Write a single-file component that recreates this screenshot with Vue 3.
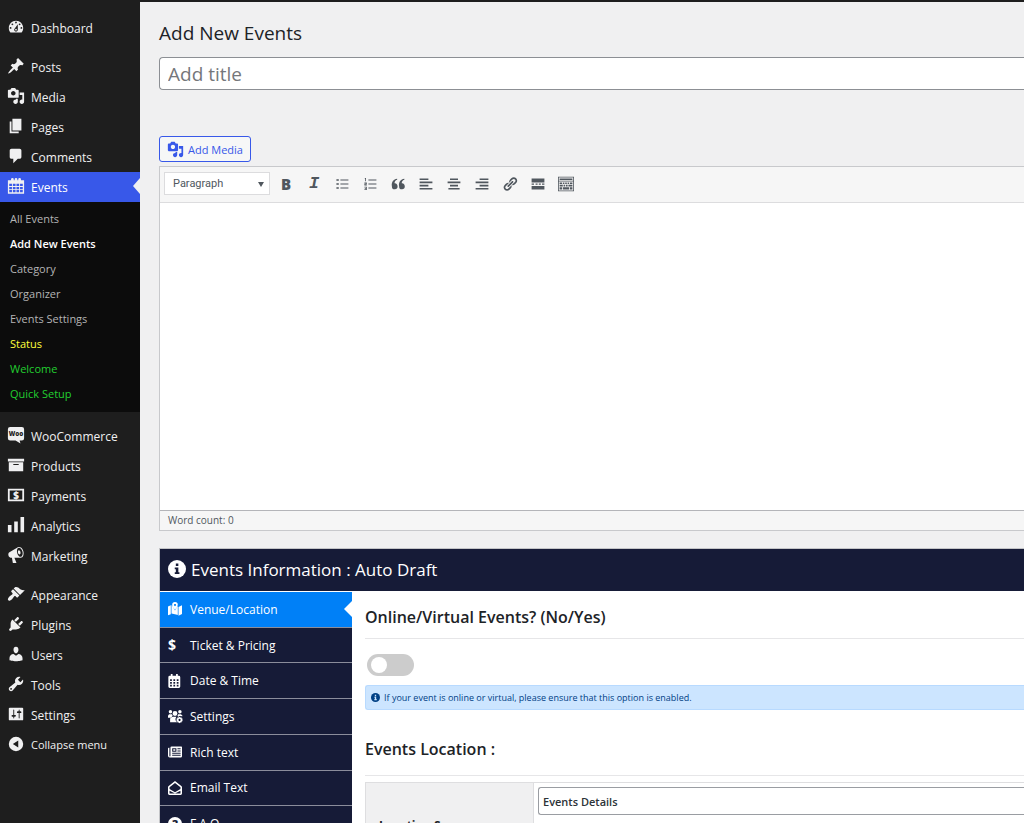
<script setup>
import { ref } from 'vue'

const icons = {
  dashboard: 'M3.76 16h12.48c1.1-1.37 1.76-3.11 1.76-5 0-4.42-3.58-8-8-8s-8 3.58-8 8c0 1.89.66 3.63 1.76 5zM10 4c.55 0 1 .45 1 1s-.45 1-1 1-1-.45-1-1 .45-1 1-1zM6 6c.55 0 1 .45 1 1s-.45 1-1 1-1-.45-1-1 .45-1 1-1zm8 0c.55 0 1 .45 1 1s-.45 1-1 1-1-.45-1-1 .45-1 1-1zm-5.37 5.55L12 7v6c0 1.1-.9 2-2 2s-2-.9-2-2c0-.57.24-1.08.63-1.45zM4 10c.55 0 1 .45 1 1s-.45 1-1 1-1-.45-1-1 .45-1 1-1zm12 0c.55 0 1 .45 1 1s-.45 1-1 1-1-.45-1-1 .45-1 1-1zm-5 3c0-.55-.45-1-1-1s-1 .45-1 1 .45 1 1 1 1-.45 1-1z',
  post: 'M10.44 3.02l1.82-1.82 6.36 6.35-1.83 1.82c-1.05-.68-2.48-.57-3.41.36l-.75.75c-.92.93-1.04 2.35-.35 3.41l-1.83 1.82-2.41-2.41-2.8 2.79c-.42.42-3.38 2.71-3.8 2.29s1.86-3.39 2.28-3.81l2.79-2.79L4.1 9.36l1.83-1.82c1.05.69 2.48.57 3.4-.36l.75-.75c.93-.92 1.05-2.35.36-3.41z',
  media: 'M13 11V4c0-.55-.45-1-1-1h-1.67L9 1H5L3.67 3H2c-.55 0-1 .45-1 1v7c0 .55.45 1 1 1h10c.55 0 1-.45 1-1zM7 4.5c1.38 0 2.5 1.12 2.5 2.5S8.38 9.5 7 9.5 4.5 8.38 4.5 7 5.62 4.5 7 4.5zM14 6h5v10.5c0 1.38-1.12 2.5-2.5 2.5S14 17.88 14 16.5s1.12-2.5 2.5-2.5c.17 0 .34.02.5.05V9h-3V6zm-4 8.05V13h2v3.5c0 1.38-1.12 2.5-2.5 2.5S7 17.88 7 16.5 8.12 14 9.5 14c.17 0 .34.02.5.05z',
  page: 'M6 15V2h10v13H6zm-1 1h8v2H3V5h2v11z',
  comments: 'M5 2h9c1.1 0 2 .9 2 2v7c0 1.1-.9 2-2 2h-2l-5 5v-5H5c-1.1 0-2-.9-2-2V4c0-1.1.9-2 2-2z',
  calendar: 'M15 3.500h4v15H1v-15h3.500V2.500a1.500 1.500 0 0 1 3 0v1H8.500V2.500a1.500 1.500 0 0 1 3 0v1h1V2.500a1.500 1.500 0 0 1 3 0v1zM2.500 7.500v2.500h3v-2.500zM6.500 7.500v2.500h3v-2.500zM10.500 7.500v2.500h3v-2.500zM14.500 7.500v2.500h3v-2.500zM2.500 11v2.500h3v-2.500zM6.500 11v2.500h3v-2.500zM10.500 11v2.500h3v-2.500zM14.500 11v2.500h3v-2.500zM2.500 14.500v2.500h3v-2.500zM6.500 14.500v2.500h3v-2.500zM10.500 14.500v2.500h3v-2.500zM14.500 14.500v2.500h3v-2.500z',
  archive: 'M19 3v3H1V3h18zM2 7h16v10H2V7zm11 3V9H7v1h6z',
  chart: 'M19 18V1h-4v17h4zm-7 0V6H8v12h4zm-7 0v-8H1v8h4z',
  megaphone: 'M18.150 5.940c.46 1.620.38 3.220-.02 4.480-.42 1.280-1.260 2.180-2.300 2.480-.16.06-.26.06-.4.06-.06.02-.12.02-.18.02-.06.02-.14.02-.22.02h-6.800l2.220 5.500c.02.14-.06.26-.14.34-.08.1-.24.16-.34.16H6.950c-.1 0-.26-.06-.34-.16-.08-.08-.16-.2-.14-.34l-1-5.500H4.250l-.02-.02c-.5.06-1.080-.18-1.540-.62s-.88-1.080-1.060-1.880c-.24-.8-.2-1.560-.02-2.200.18-.62.58-1.080 1.060-1.300l.02-.02 9-5.400c.1-.06.18-.1.24-.16.06-.04.14-.08.24-.12.16-.08.28-.12.5-.18 1.040-.3 2.240.1 3.220.98s1.840 2.240 2.260 3.860zm-2.580 5.980h-.02c.4-.1.74-.34 1.040-.7.58-.7.86-1.760.86-3.040 0-.64-.1-1.300-.28-1.980-.34-1.360-1.020-2.500-1.780-3.240s-1.680-1.100-2.460-.88c-.82.22-1.400.96-1.700 2-.32 1.040-.28 2.360.06 3.720.38 1.360 1 2.500 1.800 3.240.78.74 1.620 1.100 2.480.88zm-2.540-7.080c.22-.04.42-.02.62.04.38.16.76.48 1.020 1s.42 1.200.42 1.780c0 .3-.04.56-.12.8-.18.48-.44.84-.86.94-.34.1-.8-.06-1.140-.4s-.64-.86-.78-1.500c-.18-.62-.12-1.240.02-1.720s.48-.84.82-.94z',
  appearance: 'M14.48 11.06L7.41 3.99l1.5-1.5c.5-.56 2.3-.47 3.51.32 1.21.8 1.43 1.28 2.91 2.1 1.18.64 2.45 1.26 4.45.85zm-.71.71L6.7 4.7 4.93 6.47c-.39.39-.39 1.02 0 1.41l1.06 1.06c.39.39.39 1.03 0 1.42-.6.6-1.43 1.11-2.21 1.69-.35.26-.7.53-1.01.84C1.43 14.23.4 16.08 1.4 17.07c.99 1 2.84-.03 4.18-1.36.31-.31.58-.66.85-1.02.57-.78 1.08-1.61 1.69-2.21.39-.39 1.02-.39 1.41 0l1.06 1.06c.39.39 1.02.39 1.41 0z',
  plugins: 'M13.11 4.36L9.87 7.6 8 5.73l3.24-3.24c.35-.34 1.05-.2 1.56.32.52.51.66 1.21.31 1.55zm-8 1.77l.91-1.12 9.01 9.01-1.19.84c-.71.71-2.63 1.16-3.82 1.16H6.14L4.9 17.26c-.59.59-1.54.59-2.12 0-.59-.58-.59-1.53 0-2.12l1.24-1.24v-3.88c0-1.13.4-3.19 1.09-3.89zm7.26 3.97l3.24-3.24c.34-.35 1.04-.21 1.55.31.52.51.66 1.21.31 1.55l-3.24 3.25z',
  users: 'M10 9.25c-2.27 0-2.73-3.44-2.73-3.44C7 4.02 7.82 2 9.97 2c2.16 0 2.98 2.02 2.71 3.81 0 0-.41 3.44-2.68 3.44zm0 2.57L12.72 10c2.39 0 4.52 2.33 4.52 4.53v2.49s-3.65 1.13-7.24 1.13c-3.65 0-7.24-1.13-7.24-1.13v-2.49c0-2.25 1.94-4.48 4.47-4.48z',
  tools: 'M16.68 9.77c-1.34 1.34-3.3 1.67-4.95.99l-5.41 6.52c-.99.99-2.59.99-3.58 0s-.99-2.59 0-3.57l6.52-5.42c-.68-1.65-.35-3.61.99-4.95 1.28-1.28 3.12-1.62 4.72-1.06l-2.89 2.89 2.82 2.82 2.86-2.87c.53 1.58.18 3.39-1.08 4.65zM3.81 16.21c.4.39 1.04.39 1.43 0 .4-.4.4-1.04 0-1.43-.39-.4-1.03-.4-1.43 0-.39.39-.39 1.03 0 1.43z',
  settings: 'M18 16V4c0-.55-.45-1-1-1H3c-.55 0-1 .45-1 1v12c0 .55.45 1 1 1h14c.55 0 1-.45 1-1zM8 11h1c.55 0 1 .45 1 1s-.45 1-1 1H8v1.500c0 .28-.22.5-.5.5s-.5-.22-.5-.5V13H6c-.55 0-1-.45-1-1s.45-1 1-1h1V5.500c0-.28.22-.5.5-.5s.5.22.5.5V11zm5-2h-1c-.55 0-1-.45-1-1s.45-1 1-1h1V5.500c0-.28.22-.5.5-.5s.5.22.5.5V7h1c.55 0 1 .45 1 1s-.45 1-1 1h-1v5.500c0 .28-.22.5-.5.5s-.5-.22-.5-.5V9z',
  collapse: 'M10 2a8 8 0 1 1 0 16 8 8 0 0 1 0-16zM12.500 6L6.500 10l6 4z',
  woo: 'M3.500 1h13A2.500 2.500 0 0 1 19 3.500v10a2.500 2.500 0 0 1-2.500 2.500H14l1 3.500L9.500 16h-6A2.500 2.500 0 0 1 1 13.500v-10A2.500 2.500 0 0 1 3.500 1z',
  payments: 'M1 3h18v14H1zM3 5v10h14V5z'
}

const groups = [
  { id: 'home', items: [{ label: 'Dashboard', icon: 'dashboard' }] },
  {
    id: 'content',
    items: [
      { label: 'Posts', icon: 'post' },
      { label: 'Media', icon: 'media' },
      { label: 'Pages', icon: 'page' },
      { label: 'Comments', icon: 'comments' },
      {
        label: 'Events',
        icon: 'calendar',
        active: true,
        children: [
          { label: 'All Events' },
          { label: 'Add New Events', tone: 'current' },
          { label: 'Category' },
          { label: 'Organizer' },
          { label: 'Events Settings' },
          { label: 'Status', tone: 'yellow' },
          { label: 'Welcome', tone: 'green' },
          { label: 'Quick Setup', tone: 'green' }
        ]
      }
    ]
  },
  {
    id: 'shop',
    items: [
      { label: 'WooCommerce', icon: 'woo' },
      { label: 'Products', icon: 'archive' },
      { label: 'Payments', icon: 'payments' },
      { label: 'Analytics', icon: 'chart' },
      { label: 'Marketing', icon: 'megaphone' }
    ]
  },
  {
    id: 'admin',
    items: [
      { label: 'Appearance', icon: 'appearance' },
      { label: 'Plugins', icon: 'plugins' },
      { label: 'Users', icon: 'users' },
      { label: 'Tools', icon: 'tools' },
      { label: 'Settings', icon: 'settings' }
    ]
  }
]

const tools = [
  { name: 'Bulleted list', d: 'M3 4h3v2H3zM3 9h3v2H3zM3 14h3v2H3zM8 4.500h10v1H8zM8 9.500h10v1H8zM8 14.500h10v1H8z' },
  { name: 'Numbered list', d: 'M3.500 2.500h1.500v4H4V3.500h-.5zM3 8h3v2.500H4v.5h2v1H3V9.500h2V9H3zM3 13.500h3v4H3v-1h2v-.5H3.500v-1H5v-.5H3zM8 4.500h10v1H8zM8 9.500h10v1H8zM8 14.500h10v1H8z' },
  { name: 'Blockquote', d: 'M9.500 13.200A3.400 3.400 0 1 1 2.400 13C1.400 7.500 4.500 4.200 8.900 3.500L9 4.700C6.500 5.500 5.600 7 5.700 9.200c2.200-.3 3.800 1.600 3.800 4zM18.500 13.200a3.400 3.400 0 1 1-7.100-.2c-1-5.500 2.100-8.800 6.500-9.500l.1 1.200c-2.500.8-3.400 2.300-3.300 4.500 2.200-.3 3.800 1.600 3.800 4z' },
  { name: 'Align left', d: 'M2 3h11v2H2zM2 7h16v2H2zM2 11h11v2H2zM2 15h16v2H2z' },
  { name: 'Align center', d: 'M5 3h10v2H5zM2 7h16v2H2zM5 11h10v2H5zM3 15h14v2H3z' },
  { name: 'Align right', d: 'M7 3h11v2H7zM2 7h16v2H2zM7 11h11v2H7zM2 15h16v2H2z' },
  { name: 'Insert link', d: 'M17.740 2.760c1.680 1.690 1.680 4.410 0 6.100l-1.530 1.520c-1.120 1.120-2.700 1.470-4.140 1.090l2.620-2.610.76-.77.76-.76c.84-.84.84-2.200 0-3.040-.84-.85-2.200-.85-3.040 0l-.77.76-3.380 3.380c-.37-1.440-.02-3.020 1.100-4.140l1.520-1.530c1.690-1.680 4.420-1.680 6.100 0zM8.590 13.430l5.340-5.340c.42-.42.42-1.100 0-1.520-.44-.43-1.130-.39-1.530 0l-5.330 5.340c-.42.42-.42 1.100 0 1.520.44.43 1.130.39 1.520 0zm-.76 2.290l4.140-4.150c.38 1.440.03 3.020-1.090 4.140l-1.520 1.530c-1.690 1.680-4.410 1.680-6.100 0-1.680-1.680-1.680-4.420 0-6.100l1.530-1.520c1.120-1.120 2.700-1.470 4.140-1.100l-4.140 4.150c-.85.84-.85 2.200 0 3.050.84.84 2.200.84 3.040 0z' },
  { name: 'Read more', d: 'M2 3h16v5H2zM2 9.500h3v1.500H2zM7 9.500h2.500v1.500H7zM11 9.500h2.500v1.500H11zM15 9.500h3v1.500h-3zM2 12.500h16v4.500H2z' },
  { name: 'Toolbar toggle', d: 'M0 1h20v18H0zM1 2v4h18V2zM2 3h16v2H2zM1 7v11h18V7zM2 8h3v2H2zM6 8h2v2H6zM9 8h2v2H9zM12 8h2v2h-2zM15 8h3v2h-3zM2 11h4v2H2zM7 11h2v2H7zM10 11h2v2h-2zM13 11h5v2h-5zM2 14h3v3H2zM6 14h8v3H6zM15 14h3v3h-3z' }
]

const tabs = [
  { label: 'Venue/Location', icon: 'M0 6.500L4 4.500v13L0 19zM5 4.500l1.500.6c.5 2.700 2 4.800 3.500 6.900 1.500-2.100 3-4.200 3.500-6.900L14 7.500v11l-1-.2-8-1.800zM15 7l5-2.500V17l-5 2.500zM10 0a4 4 0 0 1 4 4c0 2-2 4.700-4 7-2-2.300-4-5-4-7a4 4 0 0 1 4-4zM10 2.800a1.400 1.400 0 1 0 .01 0z', active: true },
  { label: 'Ticket & Pricing', sign: '$' },
  { label: 'Date & Time', icon: 'M4 0h2.500v2.500h5V0H14v2.500h1.500A2 2 0 0 1 17.500 4.500V18a2 2 0 0 1-2 2h-13a2 2 0 0 1-2-2V4.500a2 2 0 0 1 2-2H4zM3 7.500V10h2.500V7.500zM7.700 7.500V10h2.500V7.500zM12.500 7.500V10H15V7.500zM3 11.500V14h2.500v-2.500zM7.700 11.500V14h2.500v-2.500zM12.500 11.500V14H15v-2.500zM3 15.500V18h2.500v-2.500zM7.700 15.500V18h2.500v-2.500zM12.500 15.500V18H15v-2.500z' },
  { label: 'Settings', wide: true, icon: 'M3.500 1.500a2.500 2.500 0 1 1 0 5 2.500 2.500 0 0 1 0-5zM10 3a3.500 3.500 0 1 1 0 7 3.500 3.500 0 0 1 0-7zM17 1.500a2.500 2.500 0 1 1 0 5 2.500 2.500 0 0 1 0-5zM1.500 7.500h4l1.200 1.600-2 3.400H0V9.500zM14.500 7.500h4l2 1.800v1.200l-4.500-.5-1.500 1.500-.9-2zM7 11h5a6 6 0 0 0 1 8H3v-4a4 4 0 0 1 4-4zM16.500 11l1 1 1.600-.3.4 1.600 1.500.8-.6 1.500.6 1.500-1.500.8-.4 1.500-1.600-.2-1 1-1.300-1-1.500.2-.3-1.500-1.500-.8.7-1.500-.7-1.500 1.500-.8.300-1.600 1.500.3zM16.500 14a1.500 1.500 0 1 0 .01 0z' },
  { label: 'Rich text', icon: 'M5 2h14a1 1 0 0 1 1 1v13a2 2 0 0 1-2 2H2.500A2.500 2.500 0 0 1 0 15.500V5a1 1 0 0 1 1-1h1v11.500a.7.7 0 0 0 1.500 0V3.500A1.500 1.500 0 0 1 5 2zM6 4.500v5h6v-5zM7.500 6h3v2.200h-3zM13.500 4.500V6H18V4.500zM13.500 7.700v1.500H18V7.700zM6 11v1.400h12V11zM6 14v1.400h12V14z' },
  { label: 'Email Text', icon: 'M10 0l9 7a2.500 2.500 0 0 1 1 2v9a2 2 0 0 1-2 2H2a2 2 0 0 1-2-2V9a2.500 2.500 0 0 1 1-2zM10 2.700L2.200 9v2.500L10 16l7.800-4.500V9zM2.200 13.800V18h15.600v-4.200L10 18z' },
  { label: 'F.A.Q', help: '?' }
]

const title = ref('')
const format = ref('Paragraph')
const online = ref(false)
const source = ref('Events Details')
const body = ref('')
</script>

<template>
  <div class="screen">
    <nav class="sidebar" aria-label="Main menu">
      <ul v-for="group in groups" :key="group.id" class="group">
        <li v-for="item in group.items" :key="item.label">
          <a href="#" class="entry" :class="{ active: item.active }">
            <svg class="glyph" viewBox="0 0 20 20" aria-hidden="true">
              <path :d="icons[item.icon]" fill-rule="evenodd" />
              <text v-if="item.icon === 'woo'" class="woo-mark" x="10" y="11" text-anchor="middle">Woo</text>
              <text v-if="item.icon === 'payments'" class="money-mark" x="10" y="14" text-anchor="middle">$</text>
            </svg>
            <span>{{ item.label }}</span>
          </a>
          <ul v-if="item.children" class="submenu">
            <li v-for="child in item.children" :key="child.label">
              <a href="#" class="sub" :class="child.tone">{{ child.label }}</a>
            </li>
          </ul>
        </li>
        <li v-if="group.id === 'admin'">
          <button type="button" class="entry collapse">
            <svg class="glyph" viewBox="0 0 20 20" aria-hidden="true">
              <path :d="icons.collapse" fill-rule="evenodd" />
            </svg>
            <span>Collapse menu</span>
          </button>
        </li>
      </ul>
    </nav>

    <main class="content">
      <h1>Add New Events</h1>
      <input v-model="title" class="title" type="text" placeholder="Add title" aria-label="Add title" />

      <button type="button" class="add-media">
        <svg class="glyph" viewBox="0 0 20 20" aria-hidden="true"><path :d="icons.media" fill-rule="evenodd" /></svg>
        <span>Add Media</span>
      </button>

      <section class="editor">
        <div class="toolbar">
          <div class="format">
            <select v-model="format" aria-label="Text format">
              <option>Paragraph</option>
            </select>
            <svg viewBox="0 0 6 6" aria-hidden="true"><path d="M0 1h6L3 6z" /></svg>
          </div>
          <button type="button" class="tool bold">B</button>
          <button type="button" class="tool italic">I</button>
          <button v-for="tool in tools" :key="tool.name" type="button" class="tool" :aria-label="tool.name">
            <svg viewBox="0 0 20 20" aria-hidden="true"><path :d="tool.d" fill-rule="evenodd" /></svg>
          </button>
        </div>
        <textarea v-model="body" aria-label="Event description"></textarea>
        <div class="status">Word count: 0</div>
      </section>

      <section class="metabox">
        <h2 class="box-title">
          <svg viewBox="0 0 20 20" aria-hidden="true">
            <circle cx="10" cy="10" r="10" />
            <path class="mark" d="M8.700 4h2.800v2.700H8.700zM7.500 8.300h4v5.200h1.200V15.500H7.500v-2h1.200v-3.200H7.500z" />
          </svg>
          Events Information : Auto Draft
        </h2>
        <div class="box-body">
          <ul class="tabs">
            <li v-for="tab in tabs" :key="tab.label">
              <a href="#" class="tab" :class="{ active: tab.active }">
                <svg viewBox="0 0 20 20" aria-hidden="true">
                  <path v-if="tab.icon" :d="tab.icon" fill-rule="evenodd" />
                  <text v-if="tab.sign" class="sign" x="0" y="17">{{ tab.sign }}</text>
                  <circle v-if="tab.help" cx="10" cy="10" r="10" />
                  <text v-if="tab.help" class="help" x="10" y="16" text-anchor="middle">{{ tab.help }}</text>
                </svg>
                <span>{{ tab.label }}</span>
              </a>
            </li>
          </ul>

          <div class="panel">
            <h3 id="online-label">Online/Virtual Events? (No/Yes)</h3>
            <input v-model="online" class="switch" type="checkbox" aria-labelledby="online-label" />
            <p class="notice">
              <svg viewBox="0 0 20 20" aria-hidden="true">
                <circle cx="10" cy="10" r="10" />
                <path class="mark" d="M8.500 4h3v3h-3zM7.500 8.300h4v5.200h1.200V16H7.500v-2.500h1v-3h-1z" />
              </svg>
              If your event is online or virtual, please ensure that this option is enabled.
            </p>
            <h3 class="location">Events Location :</h3>
            <table>
              <tbody>
                <tr>
                  <th scope="row"><label for="source">Location Source:</label></th>
                  <td>
                    <select id="source" v-model="source">
                      <option>Events Details</option>
                    </select>
                  </td>
                </tr>
              </tbody>
            </table>
          </div>
        </div>
      </section>
    </main>
  </div>
</template>

<style>
body {
  background: #f0f0f1;
}
</style>

<style scoped>
* {
  box-sizing: border-box;
}
.screen {
  display: flex;
  height: 100vh;
  overflow: hidden;
  border-top: 2px solid #1e1e1e;
  background: #f0f0f1;
  color: #1d2327;
  font-family: "Segoe UI", "Open Sans", "Noto Sans", sans-serif;
  font-size: 12px;
}
ul {
  margin: 0;
  padding: 0;
  list-style: none;
}
a {
  text-decoration: none;
}
button,
input,
select,
textarea {
  margin: 0;
  font-family: inherit;
}

.sidebar {
  flex: 0 0 140px;
  padding-top: 11px;
  background: #1e1e1e;
}
.group {
  margin-bottom: 9px;
}
.entry {
  position: relative;
  display: flex;
  align-items: center;
  gap: 6px;
  width: 100%;
  height: 30px;
  padding: 2px 7px 0;
  color: #f0f0f1;
  line-height: 20px;
}
.glyph {
  width: 18px;
  height: 18px;
  margin-bottom: 5px;
  fill: #f0f0f1;
}
.entry.active {
  background: #3858e9;
  color: #fff;
}
.entry.active::after {
  position: absolute;
  top: 6px;
  right: 0;
  border: 8px solid transparent;
  border-left-width: 0;
  border-right: 7px solid #f0f0f1;
  content: "";
}
.collapse {
  padding-top: 0;
  border: 0;
  background: none;
  font-size: 11px;
}
.collapse .glyph {
  margin-bottom: 3px;
}
.woo-mark {
  fill: #1e1e1e;
  font-size: 7px;
  font-weight: 800;
}
.money-mark {
  font-size: 11px;
  font-weight: 800;
}
.submenu {
  padding: 4px 0 6px;
  background: #0c0c0c;
}
.sub {
  display: block;
  padding: 0 10px;
  color: #b4b4b5;
  font-size: 11px;
  line-height: 25px;
}
.sub.current {
  color: #fff;
  font-weight: 600;
}
.sub.yellow {
  color: #ffff3c;
}
.sub.green {
  color: #22cf30;
}

.content {
  flex: 1;
  min-width: 0;
  padding-left: 19px;
}
h1 {
  margin: 0;
  padding: 17px 0 10px;
  font-size: 19px;
  font-weight: 400;
  line-height: 28px;
}
.title {
  display: block;
  width: 100%;
  height: 33px;
  padding: 0 8px;
  border: 1px solid #8c8f94;
  border-right: 0;
  border-radius: 4px 0 0 4px;
  background: #fff;
  color: #2c3338;
  font-size: 19px;
}
.title::placeholder {
  color: #75777b;
}
.add-media {
  display: flex;
  align-items: center;
  gap: 4px;
  height: 26px;
  margin: 46px 0 4px;
  padding: 0 7px;
  border: 1px solid #3858e9;
  border-radius: 3px;
  background: #f6f7f7;
  color: #3858e9;
  font-size: 11px;
}
.add-media .glyph {
  width: 17px;
  height: 17px;
  margin: 0;
  fill: #3858e9;
}

.editor {
  border: 1px solid #c8c9cc;
  border-right: 0;
  background: #fff;
}
.toolbar {
  display: flex;
  align-items: center;
  gap: 4px;
  height: 36px;
  padding: 0 4px 2px;
  border-bottom: 1px solid #dcdcde;
  background: #f6f6f6;
}
.format {
  position: relative;
  flex: none;
}
.format select {
  display: block;
  width: 106px;
  height: 23px;
  padding: 0 8px;
  border: 1px solid #dcdcde;
  border-radius: 0;
  background: #fff;
  color: #50575e;
  font-family: Roboto, sans-serif;
  font-size: 11px;
  appearance: none;
}
.format svg {
  position: absolute;
  top: 9px;
  right: 6px;
  width: 6px;
  height: 6px;
  fill: #50575e;
}
.tool {
  display: flex;
  flex: none;
  align-items: center;
  justify-content: center;
  width: 24px;
  height: 24px;
  padding: 0;
  border: 0;
  background: none;
  color: #50575e;
}
.tool svg {
  width: 16px;
  height: 16px;
  fill: #50575e;
}
.bold {
  font-size: 15px;
  font-weight: 800;
}
.italic {
  font-family: "Liberation Mono", monospace;
  font-size: 17px;
  font-style: italic;
  font-weight: 700;
}
textarea {
  display: block;
  width: 100%;
  height: 307px;
  padding: 10px;
  border: 0;
  outline: 0;
  resize: none;
  background: #fff;
}
.status {
  height: 20px;
  padding: 0 8px;
  border-top: 1px solid #b4b5b9;
  background: #f6f6f6;
  color: #50575e;
  font-size: 10px;
  line-height: 19px;
}

.metabox {
  margin-top: 17px;
  border: 1px solid #c3c4c7;
  border-right: 0;
  background: #fff;
}
.box-title {
  display: flex;
  align-items: center;
  gap: 5px;
  height: 42px;
  margin: 0 0 1px;
  padding: 0 8px 2px;
  background: #161b37;
  color: #fff;
  font-size: 17px;
  font-weight: 400;
}
.box-title svg {
  width: 18px;
  height: 18px;
  fill: #fff;
}
.box-title .mark {
  fill: #161b37;
}
.box-body {
  display: flex;
}
.tabs {
  display: grid;
  flex: 0 0 192px;
  grid-auto-rows: 1fr;
  align-self: flex-start;
  min-height: 250px;
}
.tab {
  position: relative;
  display: flex;
  align-items: center;
  gap: 8px;
  height: 100%;
  padding: 0 8px;
  border-bottom: 1px solid #8b8d9b;
  background: #161b37;
  color: #fff;
}
.tab.active {
  background: #0080f7;
}
.tab.active::after {
  position: absolute;
  top: 9px;
  right: 0;
  border: 8px solid transparent;
  border-left-width: 0;
  border-right-color: #fff;
  content: "";
}
.tab svg {
  width: 14px;
  height: 14px;
  overflow: visible;
  fill: #fff;
}
.sign {
  font-size: 20px;
  font-weight: 700;
}
.help {
  fill: #161b37;
  font-size: 16px;
  font-weight: 800;
}

.panel {
  flex: 1;
  min-width: 0;
  padding: 12px 0 0 13px;
}
h3 {
  margin: 0 0 15px;
  padding-bottom: 8px;
  border-bottom: 1px solid #e6e6e8;
  font-size: 16px;
  font-weight: 600;
  line-height: 26px;
}
h3.location {
  margin: 26px 0 6px;
  padding-bottom: 13px;
}
.switch {
  display: block;
  width: 47px;
  height: 22px;
  margin-left: 2px;
  padding: 3px 4px;
  border-radius: 11px;
  background: #ccc;
  appearance: none;
}
.switch::before {
  display: block;
  width: 16px;
  height: 16px;
  border-radius: 50%;
  background: #fff;
  content: "";
}
.notice {
  display: flex;
  align-items: center;
  gap: 4px;
  height: 25px;
  margin: 9px 0 0;
  padding: 0 5px;
  border: 1px solid #b8daff;
  border-right: 0;
  border-radius: 3px 0 0 3px;
  background: #cce5ff;
  color: #004085;
  font-size: 9px;
}
.notice svg {
  width: 9px;
  height: 9px;
  fill: #004085;
}
.notice .mark {
  fill: #cce5ff;
}
table {
  width: 100%;
  border-collapse: collapse;
}
th,
td {
  border: 1px solid #dedee0;
  border-right: 0;
}
th {
  width: 168px;
  padding: 0 13px;
  background: #f0f0f1;
  font-size: 12px;
  font-weight: 700;
  text-align: left;
}
td {
  padding: 4px 0 52px 4px;
}
td select {
  display: block;
  width: 100%;
  height: 28px;
  padding: 0 4px;
  border: 1px solid #9a9da2;
  border-right: 0;
  border-radius: 3px 0 0 3px;
  background: #fff;
  color: #2c3338;
  font-size: 11px;
  font-weight: 600;
  appearance: none;
}
</style>
